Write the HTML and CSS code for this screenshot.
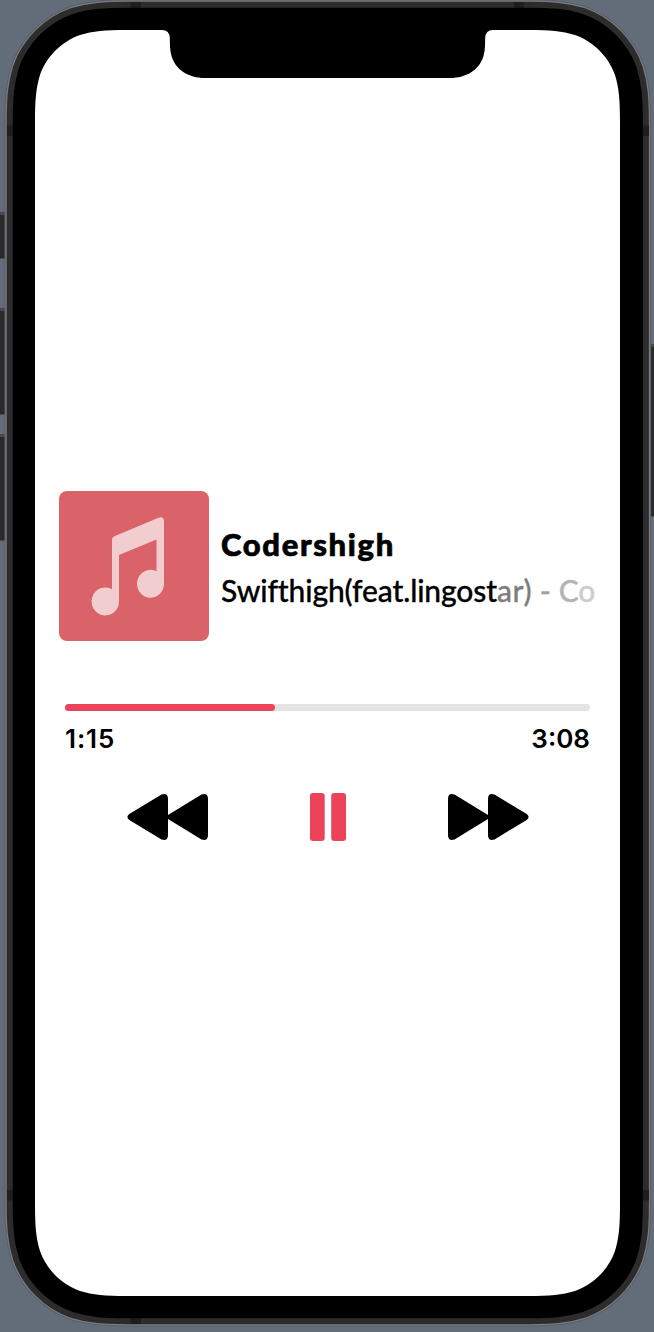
FILE: index.html
```html
<!DOCTYPE html>
<html lang="en">
<head>
<meta charset="utf-8">
<title>Codershigh</title>
<link rel="stylesheet" href="styles.css">
</head>
<body>
<div class="device">
  <svg class="device-art" viewBox="0 0 654 1332" aria-hidden="true">
    <defs>
      <path id="body" d="M35 122c0-22 1-34 5-47c6.500-18.500 21.500-33.500 40-40c13-4 25-5 47-5H528.600c22 0 34 1 47 5c18.500 6.500 33.500 21.500 40 40c4 13 5 25 5 47V1204c0 22-1 34-5 47c-6.500 18.500-21.500 33.500-40 40c-13 4-25 5-47 5H127c-22 0-34-1-47-5c-18.500-6.500-33.500-21.500-40-40c-4-13-5-25-5-47Z"/>
    </defs>
    <g class="buttons">
      <path class="button-edge" d="M0 212h6v47H0zM0 308h6v107H0zM0 434h6v107H0zM650 344h4v173h-4z"/>
      <path class="button-face" d="M0 215h6v43H0zM0 311h6v103H0zM0 437h6v103H0zM651 347h3v169h-3z"/>
    </g>
    <use href="#body" class="rim-shadow"/>
    <use href="#body" class="rim-light"/>
    <use href="#body" class="rim"/>
    <path class="antenna" d="M130.500 2h10.500v6h-10.500zM514 2h10v6h-10zM7 125.500h6v10.500H7zM643 125.500h6v10.500h-6zM7 1190h6v10.500H7zM643 1190h6v10.500h-6zM130.500 1318h10.500v6h-10.500z"/>
    <use href="#body" class="bezel"/>
    <path class="screen" d="M35 122c0-22 1-34 5-47c6.500-18.500 21.500-33.500 40-40c13-4 25-5 47-5H162Q169.500 30 169.800 38C170 44 169.700 50 171.500 56C175.500 69.500 188 78 205 78H450C467 78 479.500 69.500 483.500 56C485.300 50 485 44 485.200 38Q485.500 30 493 30H528c22 0 34 1 47 5c18.500 6.500 33.500 21.500 40 40c4 13 5 25 5 47V1204c0 22-1 34-5 47c-6.500 18.500-21.500 33.500-40 40c-13 4-25 5-47 5H127c-22 0-34-1-47-5c-18.500-6.500-33.500-21.500-40-40c-4-13-5-25-5-47Z"/>
  </svg>
  <main class="player">
    <section class="track">
      <svg class="cover" viewBox="0 0 150 150" role="img" aria-label="Music note">
        <path class="note" d="M53 49Q53 46 56 45L99.500 26.700Q105 25 105 30.500V92A13.500 14 0 1 1 97.500 80.200V48.600L60 64V110.500A13.700 14 0 1 1 53 98.200Z"/>
      </svg>
      <div class="meta">
        <h1 class="title">Codershigh</h1>
        <p class="artist">Swifthigh(feat.lingost<span class="fade-1">ar)</span><span class="fade-2"> - </span><span class="fade-3">C</span><span class="fade-4">o</span></p>
      </div>
    </section>
    <section class="progress">
      <div class="bar"><div class="bar-fill"></div></div>
      <div class="times"><span class="elapsed">1:15</span><span>3:08</span></div>
    </section>
    <section class="controls">
      <svg class="skip" viewBox="0 0 82 48" role="img" aria-label="Rewind">
        <path d="M2.300 21L34.500 1.500Q41 -.5 41 6V22L74.500 1.500Q81 -.5 81 6V42Q81 48.500 74.500 46.500L41 26V42Q41 48.500 34.500 46.500L2.300 27Q-1.500 24 2.300 21Z"/>
      </svg>
      <svg class="pause" viewBox="0 0 36 48" role="img" aria-label="Pause">
        <rect width="14.700" height="48" rx="3"/>
        <rect x="21.200" width="14.800" height="48" rx="3"/>
      </svg>
      <svg class="skip" viewBox="0 0 82 48" role="img" aria-label="Fast forward">
        <path d="M79.700 21L47.500 1.500Q41 -.5 41 6V22L7.500 1.500Q1 -.5 1 6V42Q1 48.500 7.500 46.500L41 26V42Q41 48.500 47.500 46.500L79.700 27Q83.500 24 79.700 21Z"/>
      </svg>
    </section>
  </main>
</div>
</body>
</html>
```
FILE: styles.css
```css
* { box-sizing: border-box; margin: 0; }
body { background: #636d79; overflow: hidden; }
.device { position: relative; width: 654px; height: 1332px; }
.device-art { position: absolute; inset: 0; width: 654px; height: 1332px; }
.device-art use { fill: none; }
.button-edge { fill: #48494b; }
.button-face { fill: #2b2b2b; }
.rim-shadow { stroke: #536070; stroke-width: 61px; }
.rim-light { stroke: #7d7b79; stroke-width: 59px; }
.rim { stroke: #2c2c2c; stroke-width: 56.5px; }
.antenna { fill: #1e1e1e; }
.device-art .bezel { fill: #000; stroke: #000; stroke-width: 44.500px; }
.screen { fill: #fff; }
.player {
  position: relative;
  display: flex;
  flex-direction: column;
  height: 100%;
  padding: 491px 59px 0;
}
.track { display: flex; align-items: center; gap: 12px; height: 150px; }
.cover { flex: none; width: 150px; height: 150px; border-radius: 8px; background: #da6369; }
.note { fill: #f2cdd0; }
.meta {
  width: 375px;
  padding-top: 2px;
  white-space: nowrap;
  color: #000;
  font-family: Lato, sans-serif;
}
.title {
  font-size: 31px;
  line-height: 46px;
  font-weight: 900;
  letter-spacing: 1.65px;
  -webkit-text-stroke: .7px;
}
.artist {
  font-size: 30px;
  line-height: 47px;
  font-weight: 500;
  letter-spacing: -.13px;
  -webkit-text-stroke: .3px;
}
.fade-1 { color: #7d7d7d; letter-spacing: .6px; }
.fade-2 { color: #a0a0a0; white-space: pre; letter-spacing: .1px; }
.fade-3 { color: #b4b4b4; }
.fade-4 { color: #cdcdcd; }
.progress { padding: 63px 5px 0 6px; }
.bar { height: 7px; border-radius: 4px; background: #e4e4e4; }
.bar-fill { width: 40%; height: 7px; border-radius: 4px; background: #eb445a; }
.times {
  display: flex;
  justify-content: space-between;
  padding-top: 12px;
  font: 600 26px/32px Inter, sans-serif;
}
.elapsed { letter-spacing: .9px; }
.controls {
  display: flex;
  justify-content: space-between;
  align-items: center;
  margin-top: 38px;
  padding: 0 66px 0 68px;
}
.skip { width: 82px; height: 48px; }
.pause { width: 36px; height: 48px; margin-left: -1px; fill: #eb445a; }
```
